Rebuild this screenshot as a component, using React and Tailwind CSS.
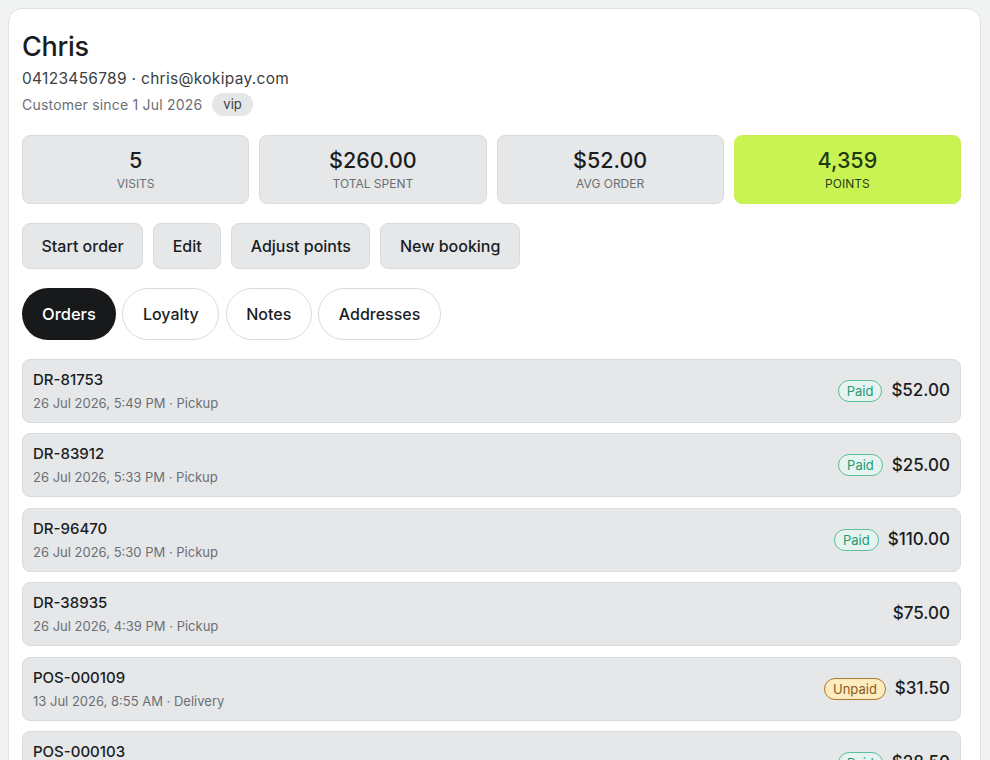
import React from 'react';

const stats = [
  { value: '5', label: 'Visits' },
  { value: '$260.00', label: 'Total spent' },
  { value: '$52.00', label: 'Avg order' },
  { value: '4,359', label: 'Points', accent: true },
];

const actions = ['Start order', 'Edit', 'Adjust points', 'New booking'];
const tabs = ['Orders', 'Loyalty', 'Notes', 'Addresses'];

const orders = [
  { id: 'DR-81753', when: '26 Jul 2026, 5:49 PM · Pickup', status: 'Paid', total: '$52.00' },
  { id: 'DR-83912', when: '26 Jul 2026, 5:33 PM · Pickup', status: 'Paid', total: '$25.00' },
  { id: 'DR-96470', when: '26 Jul 2026, 5:30 PM · Pickup', status: 'Paid', total: '$110.00' },
  { id: 'DR-38935', when: '26 Jul 2026, 4:39 PM · Pickup', status: null, total: '$75.00' },
  { id: 'POS-000109', when: '13 Jul 2026, 8:55 AM · Delivery', status: 'Unpaid', total: '$31.50' },
  { id: 'POS-000103', when: '12 Jul 2026, 2:10 PM · Pickup', status: 'Paid', total: '$28.50' },
];

function StatusBadge({ status }) {
  if (!status) return null;
  if (status === 'Unpaid') {
    return (
      <span className="rounded-full border border-[#b07a2e] bg-[#fdecc0] px-2 py-[2px] text-[13px] leading-4 text-[#8a5a1c]">
        Unpaid
      </span>
    );
  }
  return (
    <span className="rounded-full border border-[#5cbfa0] bg-[#e6f3ee] px-2 py-[2px] text-[13px] leading-4 text-[#1f9a74]">
      Paid
    </span>
  );
}

export default function App() {
  return (
    <div
      className="h-[760px] overflow-hidden bg-[#f1f3f3] pl-2 pr-[9px] pt-2 text-[#1b1d1f]"
      style={{ fontFamily: 'Inter, "Noto Sans", sans-serif' }}
    >
      <div className="rounded-[14px] border border-[#dfe3e3] bg-white pl-[13px] pr-[19px] pt-[22px] pb-6">
        <h1 className="text-[27px] font-medium leading-8 tracking-[-0.3px]">Chris</h1>
        <p className="mt-[6px] text-[15.5px] leading-5 tracking-[0.3px] text-[#3b3f43]">04123456789 · chris@kokipay.com</p>
        <div className="mt-[4px] flex items-center gap-[10px]">
          <span className="text-[14px] tracking-[0.2px] text-[#6b7075]">Customer since 1 Jul 2026</span>
          <span className="rounded-full bg-[#e4e6e8] px-[11px] py-[3px] text-[13px] leading-[17px] text-[#3b3f43]">
            vip
          </span>
        </div>

        <div className="mt-[19px] grid grid-cols-4 gap-[10px]">
          {stats.map((s) => (
            <div
              key={s.label}
              className={
                s.accent
                  ? 'flex h-[69px] flex-col items-center justify-center rounded-lg border border-[#c8ef58] bg-[#c9f353]'
                  : 'flex h-[69px] flex-col items-center justify-center rounded-lg border border-[#d9dcde] bg-[#e5e7e9]'
              }
            >
              <div
                className={
                  s.accent
                    ? 'text-[21.5px] font-medium leading-6 text-[#1f3a12]'
                    : 'text-[21.5px] font-medium leading-6'
                }
              >
                {s.value}
              </div>
              <div
                className={
                  s.accent
                    ? 'mt-[4px] text-[12px] uppercase leading-4 text-[#29401a]'
                    : 'mt-[4px] text-[12px] uppercase leading-4 text-[#6b7075]'
                }
              >
                {s.label}
              </div>
            </div>
          ))}
        </div>

        <div className="mt-[19px] flex gap-[10px]">
          {actions.map((a) => (
            <button
              key={a}
              className="h-[46px] rounded-lg border border-[#d9dcde] bg-[#e5e7e9] px-[18.5px] text-[16px] font-medium text-[#1b1d1f]"
            >
              {a}
            </button>
          ))}
        </div>

        <div className="mt-[19px] flex gap-[6.5px]">
          {tabs.map((t, i) => (
            <button
              key={t}
              className={
                i === 0
                  ? 'h-[52px] rounded-full bg-[#18191b] px-[20px] text-[16.5px] font-medium text-white'
                  : 'h-[52px] rounded-full border border-[#d9dcde] bg-white px-[19.5px] text-[16px] font-medium text-[#1b1d1f]'
              }
            >
              {t}
            </button>
          ))}
        </div>

        <div className="mt-[19px] flex flex-col gap-[10.4px]">
          {orders.map((o) => (
            <div
              key={o.id}
              className="flex h-[64px] items-center justify-between rounded-lg border border-[#d9dcde] bg-[#e5e7e9] pl-[10px] pr-[10px]"
            >
              <div>
                <div className="text-[15px] font-medium leading-5">{o.id}</div>
                <div className="mt-[4px] text-[13px] leading-[18px] text-[#6b7075]">{o.when}</div>
              </div>
              <div className="flex items-center gap-[9px]">
                <StatusBadge status={o.status} />
                <span className="text-[17px] font-medium">{o.total}</span>
              </div>
            </div>
          ))}
        </div>
      </div>
    </div>
  );
}
